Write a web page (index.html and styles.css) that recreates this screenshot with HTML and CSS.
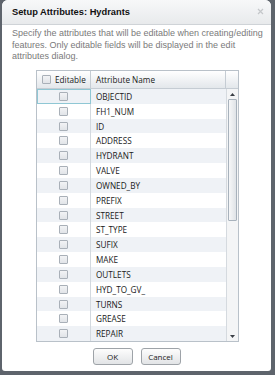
FILE: index.html
```html
<!DOCTYPE html>
<html>
<head>
<meta charset="utf-8">
<link rel="stylesheet" href="styles.css">
</head>
<body>
<div class="dialog">
  <div class="titlebar">
    <span class="title">Setup Attributes: Hydrants</span>
    <span class="close">
      <svg width="7" height="7" viewBox="0 0 7 7"><path d="M1 1L6 6M6 1L1 6" stroke="#c4c7ca" stroke-width="1.2"/></svg>
    </span>
  </div>
  <div class="desc">Specify the attributes that will be editable when creating/editing features. Only editable fields will be displayed in the edit attributes dialog.</div>
  <div class="grid">
    <div class="header">
      <div class="hcell hedit"><span class="cb"></span><span>Editable</span></div>
      <div class="hcell hname">Attribute Name</div>
      <div class="hcell hscroll"></div>
    </div>
    <div class="body">
      <div class="rows">
        <div class="row alt"><div class="cedit focus"><span class="cb"></span></div><div class="cname">OBJECTID</div></div>
        <div class="row"><div class="cedit"><span class="cb"></span></div><div class="cname">FH1_NUM</div></div>
        <div class="row alt"><div class="cedit"><span class="cb"></span></div><div class="cname">ID</div></div>
        <div class="row"><div class="cedit"><span class="cb"></span></div><div class="cname">ADDRESS</div></div>
        <div class="row alt"><div class="cedit"><span class="cb"></span></div><div class="cname">HYDRANT</div></div>
        <div class="row"><div class="cedit"><span class="cb"></span></div><div class="cname">VALVE</div></div>
        <div class="row alt"><div class="cedit"><span class="cb"></span></div><div class="cname">OWNED_BY</div></div>
        <div class="row"><div class="cedit"><span class="cb"></span></div><div class="cname">PREFIX</div></div>
        <div class="row alt"><div class="cedit"><span class="cb"></span></div><div class="cname">STREET</div></div>
        <div class="row"><div class="cedit"><span class="cb"></span></div><div class="cname">ST_TYPE</div></div>
        <div class="row alt"><div class="cedit"><span class="cb"></span></div><div class="cname">SUFIX</div></div>
        <div class="row"><div class="cedit"><span class="cb"></span></div><div class="cname">MAKE</div></div>
        <div class="row alt"><div class="cedit"><span class="cb"></span></div><div class="cname">OUTLETS</div></div>
        <div class="row"><div class="cedit"><span class="cb"></span></div><div class="cname">HYD_TO_GV_</div></div>
        <div class="row alt"><div class="cedit"><span class="cb"></span></div><div class="cname">TURNS</div></div>
        <div class="row"><div class="cedit"><span class="cb"></span></div><div class="cname">GREASE</div></div>
        <div class="row alt"><div class="cedit"><span class="cb"></span></div><div class="cname">REPAIR</div></div>
      </div>
      <div class="scrollbar">
        <div class="arrow up"><svg width="5" height="3" viewBox="0 0 5 3"><path d="M0 3L2.5 0L5 3Z" fill="#3a3f45"/></svg></div>
        <div class="thumb"></div>
        <div class="track"></div>
        <div class="arrow down"><svg width="5" height="3" viewBox="0 0 5 3"><path d="M0 0L2.5 3L5 0Z" fill="#3a3f45"/></svg></div>
      </div>
    </div>
  </div>
  <div class="buttons">
    <button class="btn">OK</button>
    <button class="btn">Cancel</button>
  </div>
</div>
</body>
</html>
```
FILE: styles.css
```css
html, body {
  margin: 0;
  padding: 0;
  background: #5e646c;
  width: 275px;
  height: 375px;
  overflow: hidden;
}
.dialog {
  margin: 0 4px 0 2px;
  width: 269px;
  height: 371px;
  background: #ffffff;
  border-radius: 6px 6px 3px 3px;
  display: flex;
  flex-direction: column;
  overflow: hidden;
  font-family: "Liberation Sans", Arial, sans-serif;
}
.titlebar {
  height: 24px;
  flex: none;
  display: flex;
  align-items: center;
  justify-content: space-between;
  padding: 0 7px 0 10px;
  background: linear-gradient(#f7f8f9, #e8eaec);
  border-bottom: 1px solid #cfd3d7;
}
.title {
  font-weight: bold;
  font-size: 9.3px;
  color: #111;
}
.close {
  display: flex;
  margin-top: -2px;
}
.desc {
  padding: 3px 8px 0 10px;
  font-size: 9px;
  line-height: 11.5px;
  color: #7a7a7a;
  height: 42px;
}
.grid {
  margin: 0 30px 0 34px;
  width: 201px;
  height: 270px;
  border: 1px solid #b9c1c9;
  display: flex;
  flex-direction: column;
  font-family: "Open Sans", sans-serif;
  font-size: 8.2px;
  color: #1a1a1a;
}
.header {
  height: 17px;
  flex: none;
  display: flex;
  background: linear-gradient(#ffffff, #e3e7eb);
  border-bottom: 1px solid #c5ccd3;
}
.hcell {
  display: flex;
  align-items: center;
  border-right: 1px solid #c5ccd3;
}
.hedit {
  width: 54px;
  padding-left: 5px;
  gap: 4px;
  box-sizing: border-box;
}
.hname {
  flex: 1;
  padding-left: 5px;
}
.hscroll {
  width: 12px;
  border-right: none;
}
.body {
  flex: 1;
  display: flex;
  min-height: 0;
}
.rows {
  flex: 1;
  display: flex;
  flex-direction: column;
}
.row {
  height: 15px;
  display: flex;
  background: #ffffff;
}
.row.alt {
  background: #eff2f6;
}
.cedit {
  width: 54px;
  display: flex;
  align-items: center;
  justify-content: center;
  border-right: 1px solid #d3d9df;
  box-sizing: border-box;
}
.cedit.focus {
  outline: 1px solid #8fc7d4;
  outline-offset: -1px;
}
.cname {
  flex: 1;
  display: flex;
  align-items: center;
  padding-left: 5px;
}
.cb {
  width: 7px;
  height: 7px;
  border: 1px solid #a9b0b8;
  border-radius: 1px;
  background: linear-gradient(#f2f3f5, #e1e4e8);
  flex: none;
}
.scrollbar {
  width: 12px;
  flex: none;
  display: flex;
  flex-direction: column;
  background: #f4f5f6;
  border-left: 1px solid #d5dadf;
  box-sizing: border-box;
}
.arrow {
  height: 10px;
  display: flex;
  align-items: center;
  justify-content: center;
}
.thumb {
  height: 120px;
  margin: 0 1px;
  border: 1px solid #a8b2bc;
  border-radius: 1px;
  background: linear-gradient(90deg, #f6f7f8, #dfe3e7);
}
.track {
  flex: 1;
}
.buttons {
  display: flex;
  justify-content: center;
  gap: 8px;
  padding-top: 6px;
}
.btn {
  width: 40px;
  height: 17px;
  padding: 0;
  border: 1px solid #9ea3a8;
  border-radius: 3px;
  background: linear-gradient(#fdfdfd, #e2e4e6);
  font-family: "Open Sans", sans-serif;
  font-size: 8px;
  color: #222;
}
```
